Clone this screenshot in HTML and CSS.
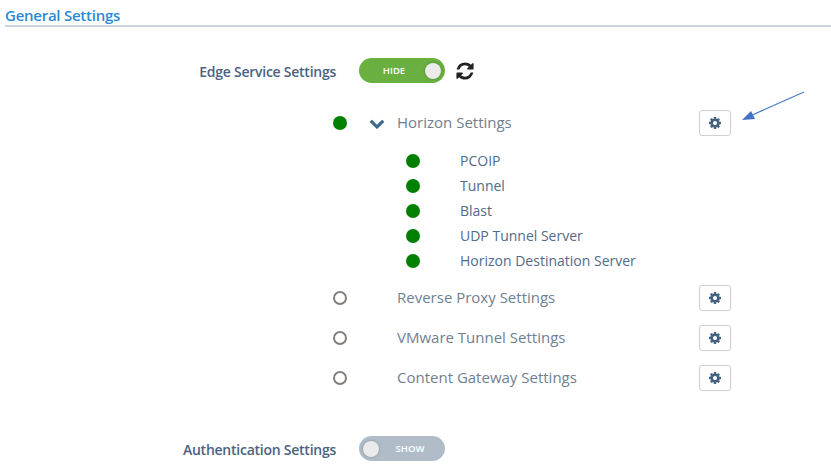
FILE: index.html
```html
<!DOCTYPE html>
<html lang="en">
<head>
  <meta charset="UTF-8" />
  <title>General Settings</title>
  <link rel="stylesheet" href="styles.css">
</head>
<body>
  <svg width="0" height="0" class="defs">
    <symbol id="cog" viewBox="0 0 1792 1792"><path d="M1152 896q0-106-75-181t-181-75-181 75-75 181 75 181 181 75 181-75 75-181zm512-109v222q0 12-8 23t-20 13l-185 28q-19 54-39 91 35 50 107 138 10 12 10 25t-9 23q-27 37-99 108t-94 71q-12 0-26-9l-138-108q-44 23-91 38-16 136-29 186-7 28-36 28h-222q-14 0-24.500-8.500t-11.500-21.500l-28-184q-49-16-90-37l-141 107q-10 9-25 9-14 0-25-11-126-114-165-168-7-10-7-23 0-12 8-23 15-21 51-66.500t54-70.500q-27-50-41-99l-183-27q-13-2-21-12.500t-8-23.500v-222q0-12 8-23t19-13l186-28q14-46 39-92-40-57-107-138-10-12-10-24 0-10 9-23 26-36 98.500-107.500t94.500-71.500q13 0 26 10l138 107q44-23 91-38 16-136 29-186 7-28 36-28h222q14 0 24.500 8.500t11.500 21.500l28 184q49 16 90 37l142-107q9-9 24-9 13 0 25 10 129 119 165 170 7 8 7 22 0 12-8 23-15 21-51 66.500t-54 70.500q26 50 41 98l183 28q13 2 21 12.500t8 23.500z"/></symbol>
  </svg>

  <h1 class="page-title">General Settings</h1>

  <div class="setting-row edge-row">
    <span class="setting-label">Edge Service Settings</span>
    <div class="toggle toggle-on"><span class="toggle-text">HIDE</span><span class="knob"></span></div>
    <svg class="refresh" viewBox="0 0 1792 1792"><path d="M1639 1056q0 5-1 7-64 268-268 434.5t-478 166.5q-146 0-282.5-55t-243.5-157l-129 129q-19 19-45 19t-45-19-19-45v-448q0-26 19-45t45-19h448q26 0 45 19t19 45-19 45l-137 137q71 66 161 102t187 36q134 0 250-65t186-179q11-17 53-117 8-23 30-23h192q13 0 22.5 9.5t9.5 22.5zm25-800v448q0 26-19 45t-45 19h-448q-26 0-45-19t-19-45 19-45l138-138q-148-137-349-137-134 0-250 65t-186 179q-11 17-53 117-8 23-30 23h-199q-13 0-22.5-9.5t-9.5-22.5v-7q65-268 270-434.5t480-166.5q146 0 284 55.5t245 156.5l130-129q19-19 45-19t45 19 19 45z"/></svg>
  </div>

  <div class="service-row horizon-row">
    <span class="dot dot-on"></span>
    <svg class="chevron" viewBox="0 0 1792 1792"><path d="M1683 808l-742 741q-19 19-45 19t-45-19l-742-741q-19-19-19-45.500t19-45.500l166-165q19-19 45-19t45 19l531 531 531-531q19-19 45-19t45 19l166 165q19 19 19 45.500t-19 45.500z"/></svg>
    <span class="service-name">Horizon Settings</span>
    <button class="cog-btn"><svg class="cog"><use href="#cog"/></svg></button>
  </div>

  <ul class="sub-list">
    <li><span class="dot dot-on"></span>PCOIP</li>
    <li><span class="dot dot-on"></span>Tunnel</li>
    <li><span class="dot dot-on"></span>Blast</li>
    <li><span class="dot dot-on"></span>UDP Tunnel Server</li>
    <li><span class="dot dot-on"></span>Horizon Destination Server</li>
  </ul>

  <div class="service-row">
    <span class="dot dot-off"></span>
    <span class="service-name">Reverse Proxy Settings</span>
    <button class="cog-btn"><svg class="cog"><use href="#cog"/></svg></button>
  </div>
  <div class="service-row">
    <span class="dot dot-off"></span>
    <span class="service-name">VMware Tunnel Settings</span>
    <button class="cog-btn"><svg class="cog"><use href="#cog"/></svg></button>
  </div>
  <div class="service-row">
    <span class="dot dot-off"></span>
    <span class="service-name">Content Gateway Settings</span>
    <button class="cog-btn"><svg class="cog"><use href="#cog"/></svg></button>
  </div>

  <div class="setting-row auth-row">
    <span class="setting-label">Authentication Settings</span>
    <div class="toggle toggle-off"><span class="knob"></span><span class="toggle-text">SHOW</span></div>
  </div>

  <!-- annotation drawn over the screenshot -->
  <svg class="arrow" width="70" height="34" viewBox="0 0 70 34">
    <line x1="63" y1="1" x2="9" y2="25" stroke="#4a7ec9" stroke-width="1.2"/>
    <polygon points="1,29 10,20 14,28" fill="#4472c4"/>
  </svg>
</body>
</html>
```

FILE: styles.css
```css
body {
  margin: 0;
  height: 474px;
  overflow: hidden;
  position: relative;
  background-color: #fff;
  font-family: 'Open Sans', sans-serif;
  color: #47627e;
}
.defs {
  position: absolute;
}
.page-title {
  margin: 0 0 0 5px;
  height: 25px;
  line-height: 30px;
  font-size: 15px;
  font-weight: 600;
  letter-spacing: -0.25px;
  color: #2a8ad6;
  border-bottom: 2px solid #cbd5df;
}
.setting-row {
  display: flex;
  align-items: center;
  height: 25px;
}
.edge-row {
  margin-top: 31px;
}
.auth-row {
  margin-top: 45px;
}
.setting-label {
  width: 336px;
  margin-right: 23px;
  padding-top: 2px;
  text-align: right;
  font-size: 14px;
  font-weight: 600;
  letter-spacing: -0.25px;
  color: #4b6280;
}
.toggle {
  display: flex;
  align-items: center;
  box-sizing: border-box;
  width: 86px;
  height: 25px;
  padding: 0 4px;
  border-radius: 12.5px;
  font-size: 9.5px;
  font-weight: 600;
  color: #fff;
}
.toggle-on {
  background-color: #6ab040;
}
.toggle-off {
  background-color: #b0bdc9;
}
.toggle-text {
  flex: 1;
  text-align: center;
}
.knob {
  width: 16px;
  height: 16px;
  border-radius: 50%;
  background-color: #ebebeb;
  box-shadow: 0 0 3px rgba(0,0,0,0.25);
}
.refresh {
  width: 20px;
  height: 20px;
  margin-left: 10px;
  margin-top: 1px;
  fill: #222;
}
.service-row {
  display: grid;
  grid-template-columns: 14px 50px 302px 32px;
  align-items: center;
  height: 26px;
  margin-top: 14px;
  padding-left: 333px;
}
.horizon-row {
  margin-top: 27px;
}
.dot {
  box-sizing: border-box;
  width: 14px;
  height: 14px;
  border-radius: 50%;
}
.dot-on {
  flex: none;
  background-color: #008000;
}
.dot-off {
  border: 2.5px solid #857f7c;
  background-color: #fff;
}
.chevron {
  width: 16px;
  height: 16px;
  margin-left: 22px;
  fill: #3d6a91;
}
.service-name {
  grid-column: 3;
  padding-bottom: 2px;
  font-size: 15px;
  font-weight: 400;
  color: #708090;
}
.cog-btn {
  grid-column: 4;
  display: flex;
  align-items: center;
  justify-content: center;
  box-sizing: border-box;
  width: 32px;
  height: 26px;
  padding: 0;
  background-color: #fff;
  border: 1px solid #cfcfcf;
  border-radius: 3px;
}
.cog {
  width: 14px;
  height: 14px;
  fill: #47627e;
}
.sub-list {
  margin: 12px 0 -2px;
  padding: 0 0 0 406px;
  list-style: none;
}
.sub-list li {
  display: flex;
  align-items: center;
  height: 25px;
  font-size: 14px;
  color: #526b86;
}
.sub-list .dot {
  margin-right: 40px;
}
.arrow {
  position: absolute;
  left: 741px;
  top: 91px;
}
```
